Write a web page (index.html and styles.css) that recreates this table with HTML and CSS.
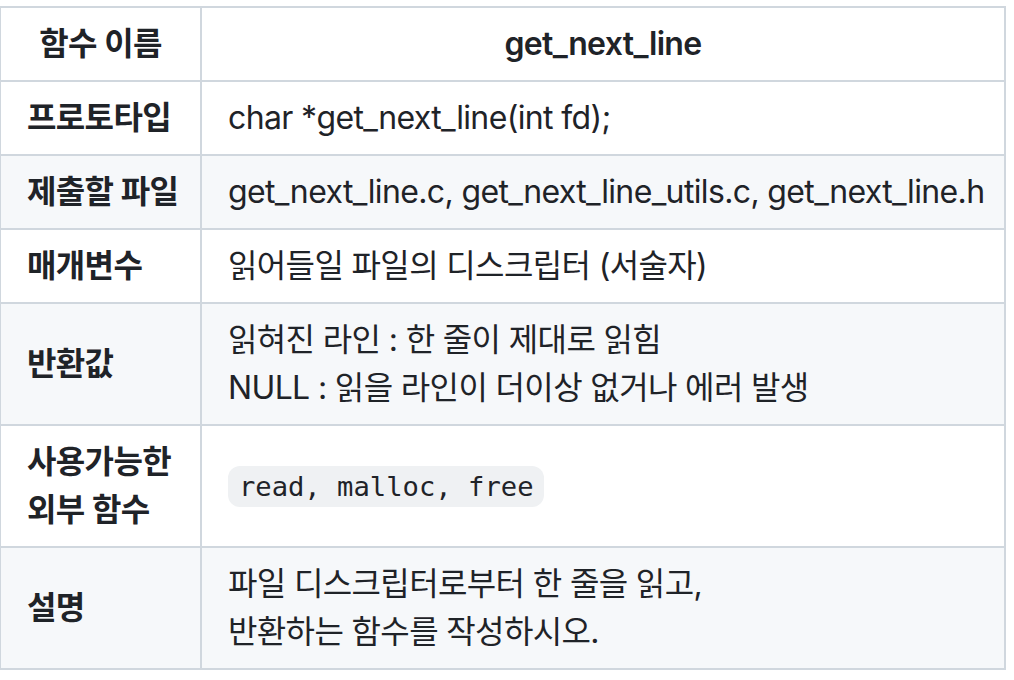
FILE: index.html
```html
<!DOCTYPE html>
<html lang="ko">
<head>
<meta charset="utf-8">
<title>get_next_line</title>
<link rel="stylesheet" href="styles.css">
</head>
<body>
<table class="spec">
  <colgroup>
    <col class="col-key">
    <col class="col-val">
  </colgroup>
  <thead>
    <tr>
      <th>함수 이름</th>
      <th>get_next_line</th>
    </tr>
  </thead>
  <tbody>
    <tr>
      <td class="key"><strong>프로토타입</strong></td>
      <td>char *get_next_line(int fd);</td>
    </tr>
    <tr>
      <td class="key"><strong>제출할 파일</strong></td>
      <td class="nowrap">get_next_line.c, get_next_line_utils.c, get_next_line.h</td>
    </tr>
    <tr>
      <td class="key"><strong>매개변수</strong></td>
      <td>읽어들일 파일의 디스크립터 (서술자)</td>
    </tr>
    <tr>
      <td class="key"><strong>반환값</strong></td>
      <td>읽혀진 라인 : 한 줄이 제대로 읽힘<br>NULL : 읽을 라인이 더이상 없거나 에러 발생</td>
    </tr>
    <tr>
      <td class="key"><strong>사용가능한<br>외부 함수</strong></td>
      <td><code>read, malloc, free</code></td>
    </tr>
    <tr>
      <td class="key"><strong>설명</strong></td>
      <td>파일 디스크립터로부터 한 줄을 읽고,<br>반환하는 함수를 작성하시오.</td>
    </tr>
  </tbody>
</table>
</body>
</html>
```

FILE: styles.css
```css
html, body {
  margin: 0;
  padding: 0;
  background: #ffffff;
}

body {
  font-family: "Inter", "Noto Sans CJK KR", sans-serif;
  font-size: 32px;
  line-height: 48px;
  letter-spacing: -0.02em;
  font-feature-settings: "palt" 1;
  color: #1f2328;
}

.spec {
  border-spacing: 0;
  table-layout: fixed;
  width: 1007px;
  margin: 6px 0 0 -1px;
  border-top: 2px solid #d0d7de;
  border-left: 2px solid #d0d7de;
}

.col-key {
  width: 201px;
}

.col-val {
  width: 804px;
}

.spec th,
.spec td {
  padding: 12px 26px;
  border-right: 2px solid #d0d7de;
  border-bottom: 2px solid #d0d7de;
  vertical-align: middle;
}

.spec th {
  font-weight: 600;
  text-align: center;
  white-space: nowrap;
}

.spec td {
  text-align: left;
}

.spec .key {
  white-space: nowrap;
}

.spec strong {
  font-weight: 600;
}

.spec tbody tr:nth-child(2n) {
  background: #f6f8fa;
}

.nowrap {
  white-space: nowrap;
}

code {
  font-family: "DejaVu Sans Mono", monospace;
  font-size: 27.2px;
  letter-spacing: 0;
  font-feature-settings: normal;
  padding: 5.4px 10.9px;
  border-radius: 12px;
  background: #eff1f3;
}
```
